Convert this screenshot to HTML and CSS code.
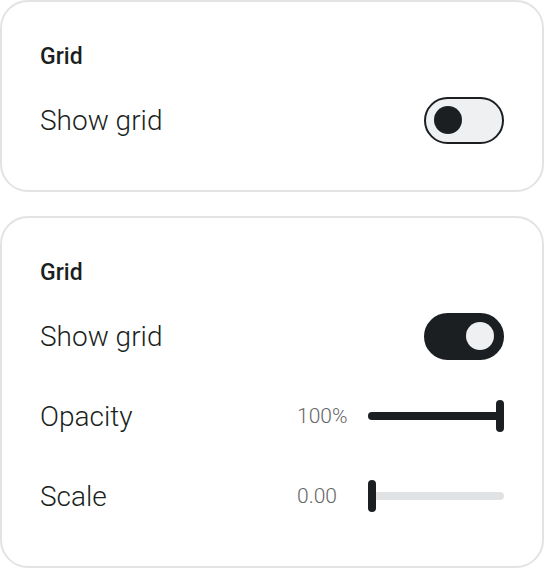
FILE: index.html
```html
<!DOCTYPE html>
<html lang="en">
<head>
  <meta charset="UTF-8">
  <meta name="viewport" content="width=device-width, initial-scale=1.0">
  <title>Grid settings</title>
  <link rel="stylesheet" href="styles.css">
</head>
<body>

  <!-- Collapsed grid panel -->
  <div class="panel">
    <h2 class="panel-title">Grid</h2>
    <div class="row">
      <span class="label">Show grid</span>
      <span class="switch"><span class="knob"></span></span>
    </div>
  </div>

  <!-- Expanded grid panel -->
  <div class="panel">
    <h2 class="panel-title">Grid</h2>
    <div class="row">
      <span class="label">Show grid</span>
      <span class="switch on"><span class="knob"></span></span>
    </div>
    <div class="row">
      <span class="label">Opacity</span>
      <div class="control">
        <span class="value">100%</span>
        <div class="slider">
          <div class="fill" style="width: 100%"></div>
          <div class="thumb end"></div>
        </div>
      </div>
    </div>
    <div class="row">
      <span class="label">Scale</span>
      <div class="control">
        <span class="value">0.00</span>
        <div class="slider">
          <div class="fill" style="width: 0%"></div>
          <div class="thumb start"></div>
        </div>
      </div>
    </div>
  </div>

</body>
</html>
```

FILE: styles.css
```css
/* Page */
body {
  margin: 0;
  font-family: Roboto, "Liberation Sans", sans-serif;
  color: #1b1f22;
  background-color: #fff;
  display: flex;
  flex-direction: column;
  gap: 24px;
}

/* Panel card */
.panel {
  border: 2px solid #e3e3e3;
  border-radius: 28px;
  padding: 41px 38px 46px 38px;
  display: flex;
  flex-direction: column;
  gap: 32px;
}

.panel-title {
  margin: 0 0 -7px 0;
  font-size: 23px;
  font-weight: 500;
  line-height: 28px;
}

.row {
  display: flex;
  justify-content: space-between;
  align-items: center;
  height: 48px;
}

.label {
  font-size: 28px;
  font-weight: 300;
}

/* Toggle switch */
.switch {
  box-sizing: border-box;
  width: 80px;
  height: 47px;
  border: 2px solid #1b1f22;
  border-radius: 24px;
  background-color: #eff0f2;
  display: flex;
  align-items: center;
  padding-left: 8px;
}

.switch .knob {
  width: 28px;
  height: 28px;
  border-radius: 50%;
  background-color: #1b1f22;
}

.switch.on {
  background-color: #1b1f22;
  justify-content: flex-end;
  padding-left: 0;
  padding-right: 8px;
}

.switch.on .knob {
  background-color: #eff0f2;
}

/* Slider */
.control {
  display: flex;
  align-items: center;
  gap: 18px;
}

.value {
  width: 53px;
  font-size: 21px;
  font-weight: 300;
  color: #666;
}

.slider {
  position: relative;
  width: 136px;
  height: 8px;
  border-radius: 4px;
  background-color: #e1e2e4;
}

.slider .fill {
  height: 100%;
  border-radius: 4px;
  background-color: #1b1f22;
}

.slider .thumb {
  position: absolute;
  top: 50%;
  width: 8px;
  height: 32px;
  transform: translateY(-50%);
  border-radius: 4px;
  background-color: #1b1f22;
}

.slider .thumb.start {
  left: 0;
}

.slider .thumb.end {
  right: 0;
}
```
